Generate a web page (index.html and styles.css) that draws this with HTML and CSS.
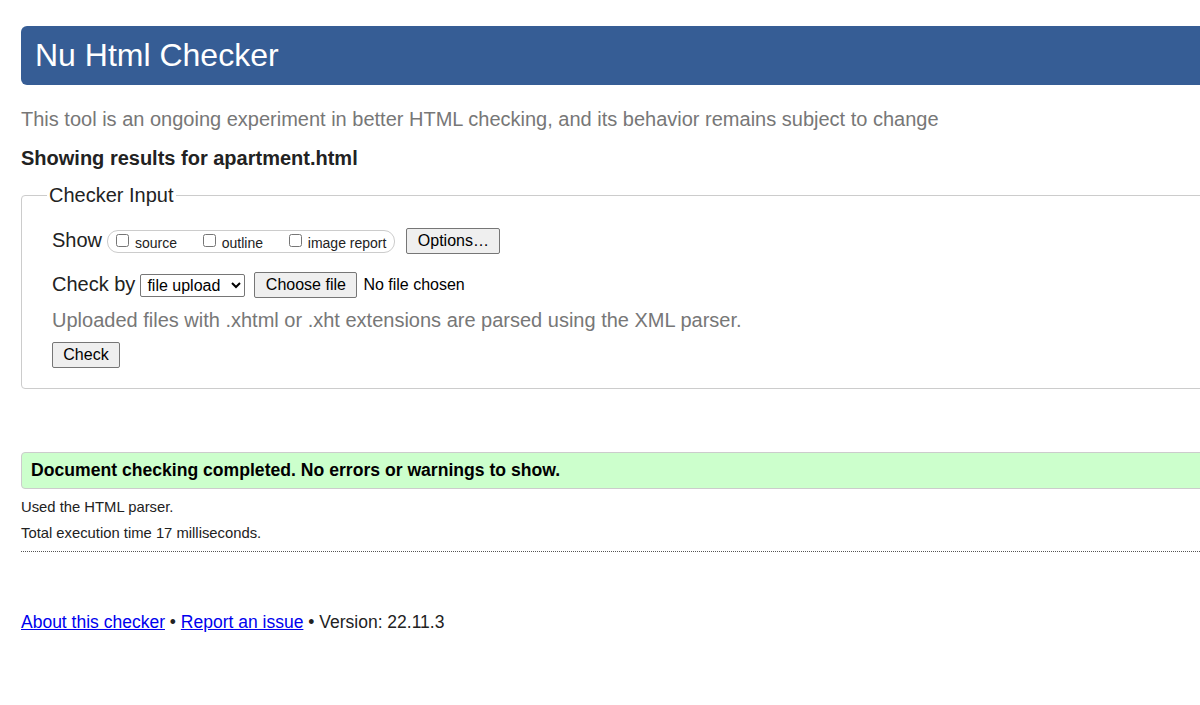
FILE: index.html
```html
<!DOCTYPE html>
<html lang="en">
<head>
<meta charset="utf-8">
<title>Showing results for apartment.html - Nu Html Checker</title>
<link rel="stylesheet" href="styles.css">
</head>
<body>
<h1 class="title">Nu Html Checker</h1>
<p class="tagline">This tool is an ongoing experiment in better HTML checking, and its behavior remains subject to change</p>
<p class="showing">Showing results for apartment.html</p>
<form class="checker">
  <fieldset class="input-box">
    <legend class="legend">Checker Input</legend>
    <div class="row row-show">
      <span class="row-label">Show</span>
      <span class="opts">
        <label class="opt"><input type="checkbox" class="cb"> source</label>
        <label class="opt"><input type="checkbox" class="cb"> outline</label>
        <label class="opt"><input type="checkbox" class="cb"> image report</label>
      </span>
      <button type="button" class="btn btn-options">Options…</button>
    </div>
    <div class="row row-by">
      <span class="row-label">Check by</span>
      <select class="sel"><option>file upload</option></select>
      <button type="button" class="btn btn-file">Choose file</button>
      <span class="nofile">No file chosen</span>
    </div>
    <p class="hint">Uploaded files with .xhtml or .xht extensions are parsed using the XML parser.</p>
    <button type="button" class="btn btn-check">Check</button>
  </fieldset>
</form>
<p class="success">Document checking completed. No errors or warnings to show.</p>
<p class="details">Used the HTML parser.</p>
<p class="details details-last">Total execution time 17 milliseconds.</p>
<p class="footer"><a href="#">About this checker</a> • <a href="#">Report an issue</a> • Version: 22.11.3</p>
</body>
</html>
```
FILE: styles.css
```css
html {
  overflow: hidden;
  background: #fff;
}
body {
  margin: 0;
  padding: 0 0 0 21px;
  font-family: "Liberation Sans", Arial, sans-serif;
  color: #222;
  background: #fff;
}
.title {
  margin: 26px -40px 0 0;
  height: 59px;
  line-height: 59px;
  padding: 0 0 0 14px;
  background: #365d95;
  color: #fff;
  font-size: 32px;
  font-weight: normal;
  border-radius: 6px;
}
.tagline {
  margin: 22px 0 0;
  font-size: 20px;
  line-height: 24px;
  color: #777;
}
.showing {
  margin: 15px 0 0;
  font-size: 20px;
  line-height: 24px;
  font-weight: bold;
}
.checker {
  margin: 14px -40px 0 0;
}
.input-box {
  margin: 0;
  border: 1px solid #ccc;
  border-radius: 4px;
  padding: 21px 0 20px 27px;
}
.legend {
  font-size: 20px;
  line-height: 23px;
  padding: 0 2px;
  margin-left: -2px;
}
.row {
  display: flex;
  align-items: center;
  height: 26px;
  padding-left: 3px;
}
.row-label {
  font-size: 20px;
  line-height: 24px;
  margin-bottom: 3px;
}
.opts {
  display: inline-block;
  margin-left: 5px;
  height: 21px;
  border: 1px solid #ccc;
  border-radius: 11px;
  padding: 0 8px 0 4px;
  font-size: 14px;
  line-height: 21px;
  white-space: nowrap;
}
.opt {
  margin-right: 18px;
}
.opt:last-child {
  margin-right: 0;
}
.cb {
  margin: 3px 2px 3px 4px;
  width: 13px;
  height: 13px;
  vertical-align: 1px;
}
.btn {
  font-family: "Liberation Sans", Arial, sans-serif;
  font-size: 16px;
  line-height: 18px;
  height: 26px;
  padding: 3px 9px;
  border: 1px solid #767676;
  border-radius: 2px;
  background: #efefef;
  color: #000;
  box-sizing: border-box;
}
.btn-options {
  margin-left: 11px;
  width: 94px;
}
.row-by {
  margin-top: 18px;
}
.sel {
  margin-left: 5px;
  height: 23px;
  width: 105px;
  font-family: "Liberation Sans", Arial, sans-serif;
  font-size: 16px;
  border: 1px solid #767676;
  border-radius: 2px;
  background: #fff;
  color: #000;
  padding: 0 0 0 2px;
}
.btn-file {
  margin-left: 9px;
  width: 103px;
  padding: 3px 0;
}
.nofile {
  margin-left: 6px;
  font-size: 16px;
  color: #000;
}
.hint {
  margin: 10px 0 0 3px;
  font-size: 20px;
  line-height: 24px;
  color: #777;
}
.btn-check {
  display: block;
  margin: 10px 0 0 3px;
  width: 68px;
  padding: 3px 0;
}
.success {
  margin: 63px -40px 0 0;
  height: 35px;
  line-height: 35px;
  padding: 0 0 0 9px;
  border: 1px solid #ccc;
  border-radius: 4px;
  background: #ccffcc;
  color: #000;
  font-weight: bold;
  font-size: 17.6px;
}
.details {
  margin: 10px 0 0;
  font-size: 14.8px;
  line-height: 17px;
}
.details-last {
  margin-top: 9px;
  padding-bottom: 9px;
  border-bottom: 1px dotted #555;
  margin-right: -40px;
}
.footer {
  margin: 60px 0 0;
  font-size: 17.5px;
  line-height: 21px;
}
.footer a {
  color: #00e;
}
```
